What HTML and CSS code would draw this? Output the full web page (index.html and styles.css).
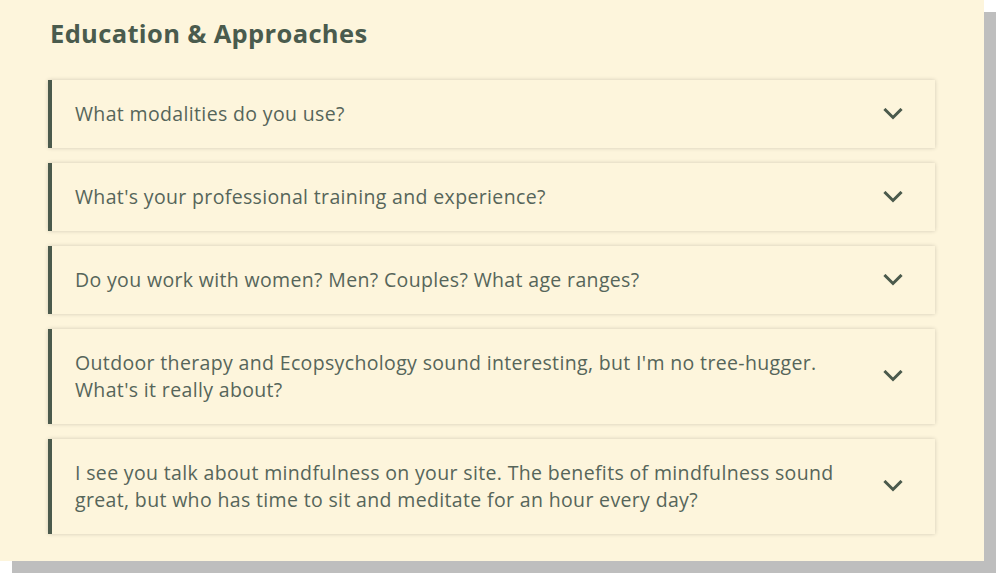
FILE: index.html
```html
<!DOCTYPE html>
<html lang="en">
<head>
<meta charset="utf-8">
<title>Education &amp; Approaches</title>
<link rel="stylesheet" href="styles.css">
</head>
<body>
<div class="page">
<section class="card">
  <h2 class="title">Education &amp; Approaches</h2>
  <div class="list">
    <div class="item">
      <div class="q">What modalities do you use?</div>
      <svg class="chev" viewBox="0 0 20 12" width="20" height="12"><polyline points="2.5,2 10,9.5 17.5,2"/></svg>
    </div>
    <div class="item">
      <div class="q">What's your professional training and experience?</div>
      <svg class="chev" viewBox="0 0 20 12" width="20" height="12"><polyline points="2.5,2 10,9.5 17.5,2"/></svg>
    </div>
    <div class="item">
      <div class="q">Do you work with women? Men? Couples? What age ranges?</div>
      <svg class="chev" viewBox="0 0 20 12" width="20" height="12"><polyline points="2.5,2 10,9.5 17.5,2"/></svg>
    </div>
    <div class="item">
      <div class="q">Outdoor therapy and Ecopsychology sound interesting, but I'm no tree-hugger. What's it really about?</div>
      <svg class="chev" viewBox="0 0 20 12" width="20" height="12"><polyline points="2.5,2 10,9.5 17.5,2"/></svg>
    </div>
    <div class="item">
      <div class="q">I see you talk about mindfulness on your site. The benefits of mindfulness sound great, but who has time to sit and meditate for an hour every day?</div>
      <svg class="chev" viewBox="0 0 20 12" width="20" height="12"><polyline points="2.5,2 10,9.5 17.5,2"/></svg>
    </div>
  </div>
</section>
</div>
</body>
</html>
```
FILE: styles.css
```css
html, body {
  margin: 0;
  padding: 0;
  background: #ffffff;
}

body {
  font-family: "Open Sans", "Noto Sans", sans-serif;
}

.page {
  width: 996px;
  height: 574px;
  overflow: hidden;
}

.card {
  box-sizing: border-box;
  width: 984px;
  height: 561px;
  background: #fdf5dc;
  box-shadow: 12px 12px 0 #bebebe;
  padding: 16px 49px 0 48px;
}

.title {
  margin: 0 0 0 2px;
  font-size: 25.5px;
  line-height: 34px;
  font-weight: 700;
  letter-spacing: 0.35px;
  color: #4a5b4d;
}

.list {
  margin-top: 30px;
  display: flex;
  flex-direction: column;
  gap: 15px;
}

.item {
  display: flex;
  align-items: center;
  background: #fdf5dc;
  border-left: 4px solid #4b5a4c;
  box-shadow: 0 0 4px rgba(0, 0, 0, 0.18);
  padding: 20px 32px 21px 23px;
}

.q {
  flex: 1;
  font-size: 19.5px;
  line-height: 27px;
  letter-spacing: 0.35px;
  color: #56655a;
  padding-right: 40px;
}

.chev {
  flex: none;
  fill: none;
  stroke: #4b5a4c;
  stroke-width: 3;
  stroke-linecap: square;
}
```
